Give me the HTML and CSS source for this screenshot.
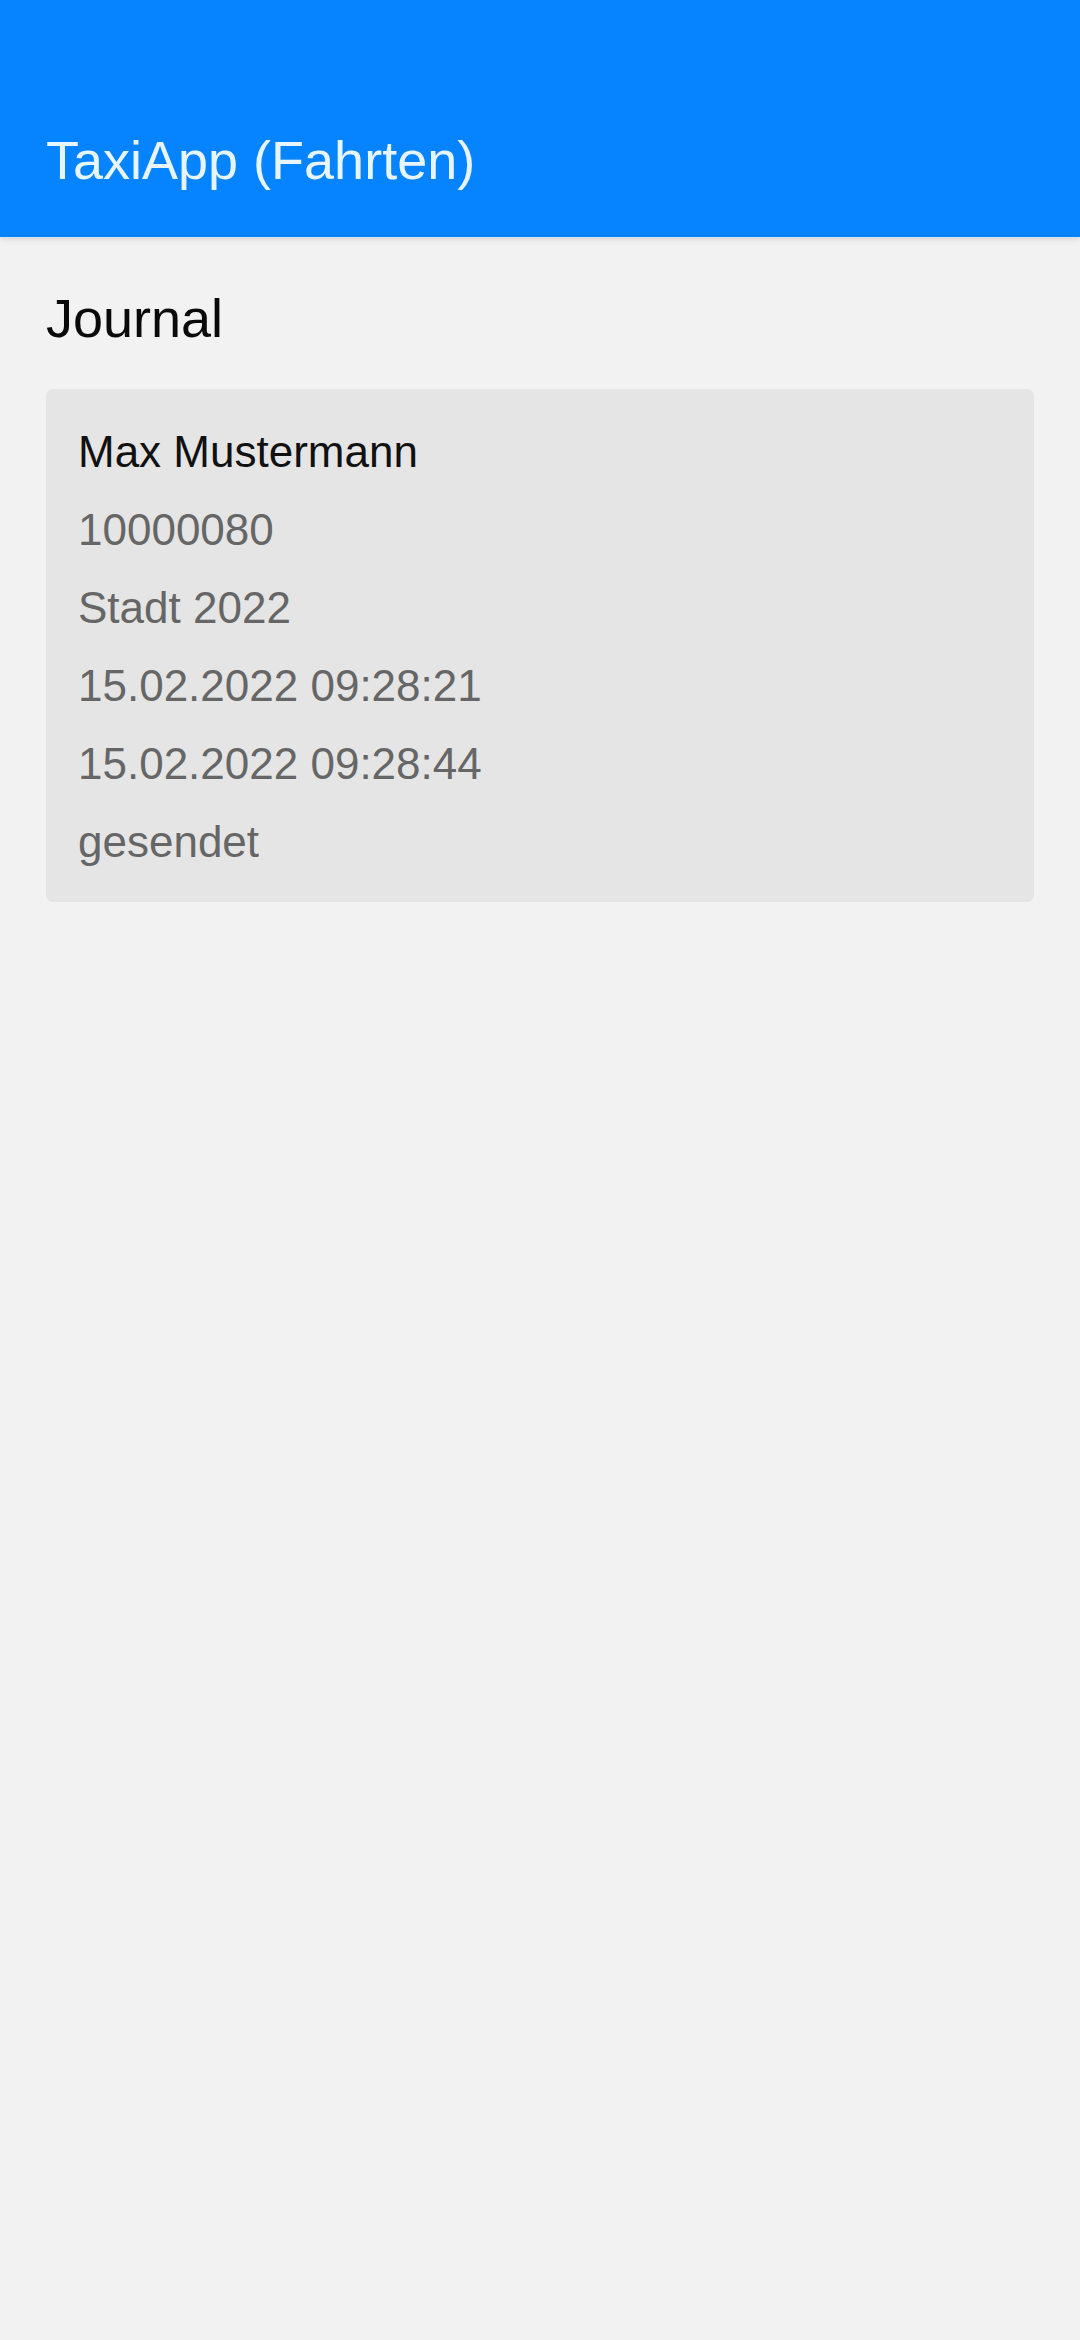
FILE: index.html
```html
<!DOCTYPE html>
<html lang="de">
<head>
    <meta charset="UTF-8">
    <meta name="viewport" content="width=device-width, initial-scale=1.0">
    <title>TaxiApp (Fahrten)</title>
    <link rel="stylesheet" href="styles.css">
</head>
<body>

    <div id="app-bar">
        <h1>TaxiApp (Fahrten)</h1>
    </div>

    <div id="content">
        <h2>Journal</h2>

        <div class="ride">
            <div class="ride-name">Max Mustermann</div>
            <div class="ride-line">10000080</div>
            <div class="ride-line">Stadt 2022</div>
            <div class="ride-line">15.02.2022 09:28:21</div>
            <div class="ride-line">15.02.2022 09:28:44</div>
            <div class="ride-line">gesendet</div>
        </div>
    </div>

</body>
</html>
```

FILE: styles.css
```css
body {
    font-family: "Liberation Sans", Arial, sans-serif;
    margin: 0;
    padding: 0;
    background-color: #f2f2f2;
    min-height: 100vh;
}

#app-bar {
    background-color: #0683fe;
    height: 237px;
    box-sizing: border-box;
    display: flex;
    align-items: flex-end;
    padding: 0 46px 45px;
    box-shadow: 0 2px 6px rgba(0, 0, 0, 0.12);
}

#app-bar h1 {
    margin: 0;
    font-size: 54px;
    font-weight: normal;
    line-height: 64px;
    color: #e6f5ff;
}

#content {
    padding: 49px 46px;
}

#content h2 {
    margin: 0 0 39px;
    font-size: 54px;
    font-weight: normal;
    line-height: 64px;
    color: #0a0a0a;
}

.ride {
    background-color: #e5e5e5;
    border-radius: 7px;
    padding: 24px 32px 21px;
}

.ride-name,
.ride-line {
    font-size: 44px;
    line-height: 78px;
}

.ride-name {
    color: #111;
}

.ride-line {
    color: #666;
}
```
